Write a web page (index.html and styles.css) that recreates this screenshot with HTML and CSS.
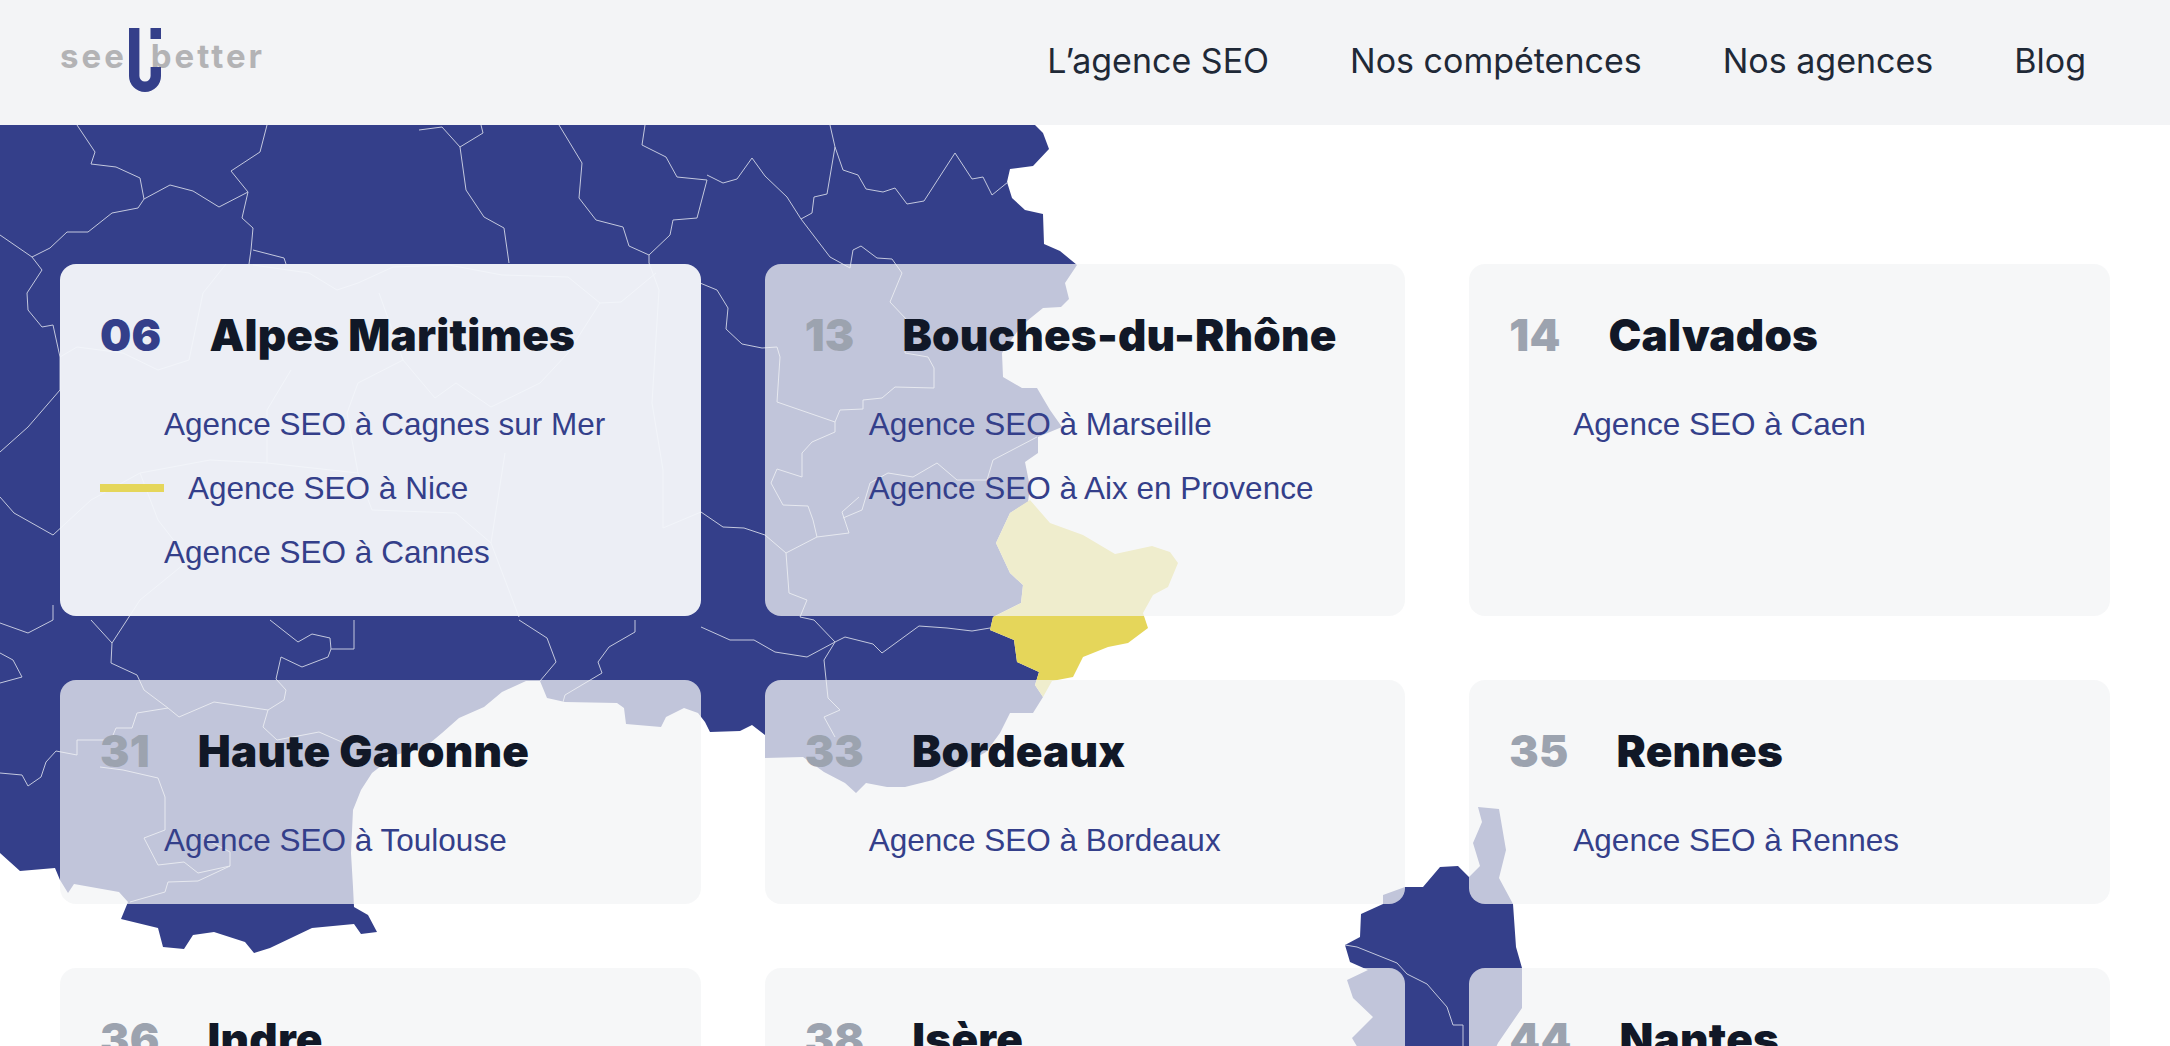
FILE: index.html
```html
<!DOCTYPE html>
<html lang="fr">
<head>
    <meta charset="UTF-8">
    <meta name="viewport" content="width=device-width, initial-scale=1.0">
    <title>Nos agences SEO - SeeUBetter</title>
    <link rel="stylesheet" href="styles.css">
</head>
<body>

    <header class="header">
        <a class="logo" href="#">
            <span>see</span>
            <span>better</span>
            <svg class="logo-u" viewBox="0 0 32 64" width="32" height="64">
                <path d="M5.2 0V48a10.8 10.8 0 0 0 21.6 0V39" fill="none" stroke="#343f8a" stroke-width="10.4"/>
                <rect x="21.5" y="0" width="11" height="11" fill="#343f8a"/>
            </svg>
        </a>
        <nav class="nav">
            <a href="#">L’agence SEO</a>
            <a href="#">Nos compétences</a>
            <a href="#">Nos agences</a>
            <a href="#">Blog</a>
        </nav>
    </header>

    <main class="page">
        <svg class="map" viewBox="0 0 2170 1046" width="2170" height="1046">
            <path class="land" d="M0 120L1033 120L1035 125L1043 133L1049 149L1033 166L1010 169L1007 182L1012 198L1025 210L1043 214L1044 244L1060 251L1077 265L1065 283L1069 299L1061 307L1043 308L1022 325L1002 353L1003 377L1022 388L1037 388L1050 410L1062 427L1038 437L1038 453L1025 462L1030 487L1028 502L1010 513L996 543L1010 573L1023 585L1021 603L993 617L990 630L1014 640L1017 662L1039 672L1035 685L1043 697L1033 713L1010 713L1000 733L986 752L954 770L933 780L905 787L887 787L866 783L856 793L845 783L824 772L803 757L765 758L765 735L752 725L740 731L710 732L705 722L698 713L684 708L666 717L661 727L626 724L624 708L617 703L565 702L547 698L540 681L526 681L502 692L484 707L459 718L442 733L424 748L395 755L372 773L361 790L353 810L351 853L353 887L354 907L368 915L377 932L361 934L354 924L312 928L270 948L254 953L245 942L214 932L193 935L184 949L163 947L158 928L121 919L128 902L119 892L74 884L68 893L60 880L55 868L20 871L0 853Z"/>
            <path class="land" d="M1478 807L1499 809L1506 850L1499 878L1513 904L1516 947L1522 968L1522 1008L1498 1043L1490 1060L1365 1060L1352 1038L1373 1017L1353 998L1347 980L1368 970L1350 962L1345 945L1360 937L1361 914L1383 904L1383 895L1405 887L1423 887L1440 867L1458 866L1469 877L1480 866L1473 843L1482 822Z"/>
            <path class="nice" d="M1030 500L1050 523L1083 535L1115 554L1152 546L1170 552L1178 563L1168 587L1153 595L1143 613L1148 628L1128 643L1108 647L1083 657L1073 677L1052 681L1043 697L1035 685L1039 672L1017 662L1014 640L990 630L993 617L1021 603L1023 585L1010 573L996 543L1010 513Z"/>

            <!-- limites des departements -->
            <path class="dep" d="M77 125L95 152L91 164L116 167L140 178L144 199L170 185L193 191L219 207L248 192L231 171L260 152L267 125"/>
            <path class="dep" d="M248 192L242 218L253 228L251 250L249 264M253 250L284 258L286 264"/>
            <path class="dep" d="M144 199L138 208L112 213L88 232L67 232L50 248L32 257L0 235"/>
            <path class="dep" d="M32 257L42 270L27 293L28 310L42 327L53 325L60 357L60 390L28 427L0 452"/>
            <path class="dep" d="M419 130L442 127L460 147L483 133L481 125M460 147L466 190L484 217L504 228L509 263"/>
            <path class="dep" d="M559 125L582 163L579 198L596 220L623 227L629 246L649 255L670 235L673 220L697 218L707 180L677 177L666 157L642 145L645 125M649 255L649 263"/>
            <path class="dep" d="M707 175L723 183L737 179L752 158L765 176L787 197L801 219L812 213L814 197L827 194L835 147L830 125"/>
            <path class="dep" d="M835 147L843 170L858 175L866 189L883 192L895 188L907 204L924 201L955 153L972 179L983 177L992 195L1008 182"/>
            <path class="dep" d="M801 219L830 257L850 268L853 250L861 246L877 258L892 259L902 273L890 302L907 320L905 353L928 357L934 368L934 388L895 387L882 398L863 400L863 409L840 410L835 422L777 402L780 357L777 347L762 348L742 344L726 329L728 308L717 290L700 283"/>
            <path class="dep" d="M835 422L835 432L812 442L802 453L802 477L777 469L771 483L783 505L808 506L813 520L817 537L849 533L842 512L859 497M817 537L786 553L789 593L807 600L800 617L814 620L835 642"/>
            <path class="dep" d="M1037 437L993 460L987 480L957 480L937 463L913 477L888 473L870 483L862 510L843 518"/>
            <path class="dep" d="M649 263L659 290L652 403L663 470L663 528L701 512L723 527L744 528L765 535L786 553"/>
            <path class="dep" d="M701 627L730 640L754 640L775 652L807 657L835 642L845 637L873 644L882 653L919 626L947 628L972 631L990 628"/>
            <path class="dep" d="M835 642L824 660L828 698L840 710L824 717L835 737"/>
            <path class="dep" d="M519 620L547 638L556 662L540 681M635 620L635 632L609 647L598 662L602 673L565 695L563 702"/>
            <path class="dep" d="M354 620L354 649L331 649L330 638L312 634L298 642L270 620M331 649L328 657L302 667L281 657L276 679L286 690L284 700L268 710L263 727L277 740L319 732L344 743"/>
            <path class="dep" d="M268 710L214 702L179 717L168 708L144 690L137 675L111 663L112 643L91 620"/>
            <path class="dep" d="M168 708L137 713L132 728L116 728L111 740L77 740L77 755L56 751L46 762L41 777L28 786L22 775L0 773"/>
            <path class="dep" d="M100 767L123 770L158 778L165 797L165 830L144 838L158 865L184 862L198 873L230 866L230 852L203 838M230 866L198 881L168 882L165 892L130 902"/>
            <path class="dep" d="M0 653L13 660L22 677L0 683M53 605L53 620L28 633L0 623"/>
            <path class="dep" d="M0 497L14 513L53 535L91 500L140 473L210 460L267 463L358 473L372 510L456 513L491 543L519 617"/>
            <path class="dep" d="M226 264L203 293L189 360L158 370L123 353L77 347L60 357"/>
            <path class="dep" d="M253 265L309 273L337 290L358 283L393 267L449 265L502 275L568 277L600 303L621 302L656 273"/>
            <path class="dep" d="M379 293L403 360L358 383L347 413L358 473M403 360L435 398L456 383L491 407L540 383L568 353L600 303"/>
            <path class="dep" d="M291 370L267 410L267 463M505 453L491 543M140 473L158 520L189 560L140 600L112 643"/>
            <path class="dep" d="M1345 945L1357 947L1397 963L1407 974L1427 984L1447 1007L1453 1025L1463 1025L1463 1046"/>
        </svg>

        <section class="grid">
            <article class="card card-active">
                <h2><span class="num">06</span>Alpes Maritimes</h2>
                <a class="link" href="#">Agence SEO à Cagnes sur Mer</a>
                <a class="link link-active" href="#">Agence SEO à Nice</a>
                <a class="link" href="#">Agence SEO à Cannes</a>
            </article>
            <article class="card">
                <h2><span class="num">13</span>Bouches-du-Rhône</h2>
                <a class="link" href="#">Agence SEO à Marseille</a>
                <a class="link" href="#">Agence SEO à Aix en Provence</a>
            </article>
            <article class="card">
                <h2><span class="num">14</span>Calvados</h2>
                <a class="link" href="#">Agence SEO à Caen</a>
            </article>
            <article class="card">
                <h2><span class="num">31</span>Haute Garonne</h2>
                <a class="link" href="#">Agence SEO à Toulouse</a>
            </article>
            <article class="card">
                <h2><span class="num">33</span>Bordeaux</h2>
                <a class="link" href="#">Agence SEO à Bordeaux</a>
            </article>
            <article class="card">
                <h2><span class="num">35</span>Rennes</h2>
                <a class="link" href="#">Agence SEO à Rennes</a>
            </article>
            <article class="card">
                <h2><span class="num">36</span>Indre</h2>
                <a class="link" href="#">Agence SEO à Châteauroux</a>
            </article>
            <article class="card">
                <h2><span class="num">38</span>Isère</h2>
                <a class="link" href="#">Agence SEO à Grenoble</a>
            </article>
            <article class="card">
                <h2><span class="num">44</span>Nantes</h2>
                <a class="link" href="#">Agence SEO à Nantes</a>
            </article>
        </section>
    </main>

</body>
</html>
```

FILE: styles.css
```css
html, body {
    height: 100%;
    overflow: hidden;
}
body {
    margin: 0;
    font-family: Inter, "Noto Sans", sans-serif;
    background: white;
    color: #111827;
}
a {
    text-decoration: none;
}
.header {
    position: relative;
    z-index: 2;
    box-sizing: border-box;
    height: 125px;
    padding: 0 84px 5px 60px;
    display: flex;
    justify-content: space-between;
    align-items: center;
    background: #f3f4f6;
}
.logo {
    position: relative;
    top: -4px;
    display: flex;
    gap: 24px;
    font-size: 33px;
    font-weight: 700;
    letter-spacing: 3px;
    color: #b3b3b5;
}
.logo-u {
    position: absolute;
    left: 69px;
    top: -8px;
}
.nav {
    display: flex;
    gap: 81px;
}
.nav a {
    font-size: 34px;
    color: #1f2937;
}
.page {
    position: relative;
    height: calc(100vh - 125px);
}
.map {
    position: absolute;
    left: 0;
    top: -125px;
}
.land {
    fill: #343f8a;
}
.nice {
    fill: #e5d65a;
}
.dep {
    fill: none;
    stroke: #c3c8de;
    stroke-width: 1;
}
.grid {
    position: relative;
    padding: 139px 60px 0;
    display: grid;
    grid-template-columns: repeat(3, 1fr);
    gap: 64px;
}
.card {
    padding: 41px 40px 32px;
    border-radius: 16px;
    background: rgba(243, 244, 246, 0.74);
}
.card-active {
    background: rgba(244, 246, 250, 0.96);
}
.card h2 {
    display: flex;
    gap: 48px;
    margin: 0 0 27px;
    font-size: 44px;
    line-height: 60px;
    font-weight: 900;
    letter-spacing: 0.2px;
    color: #111827;
}
.num {
    color: #9ca3af;
}
.card-active .num {
    color: #343f8a;
}
.link {
    height: 64px;
    padding-left: 64px;
    display: flex;
    align-items: center;
    gap: 24px;
    font-family: "Liberation Sans", Arial, sans-serif;
    font-size: 31.5px;
    color: #343f8a;
}
.link-active {
    padding-left: 0;
}
.link-active::before {
    content: "";
    width: 64px;
    height: 8px;
    background: #e5d65a;
}
```
